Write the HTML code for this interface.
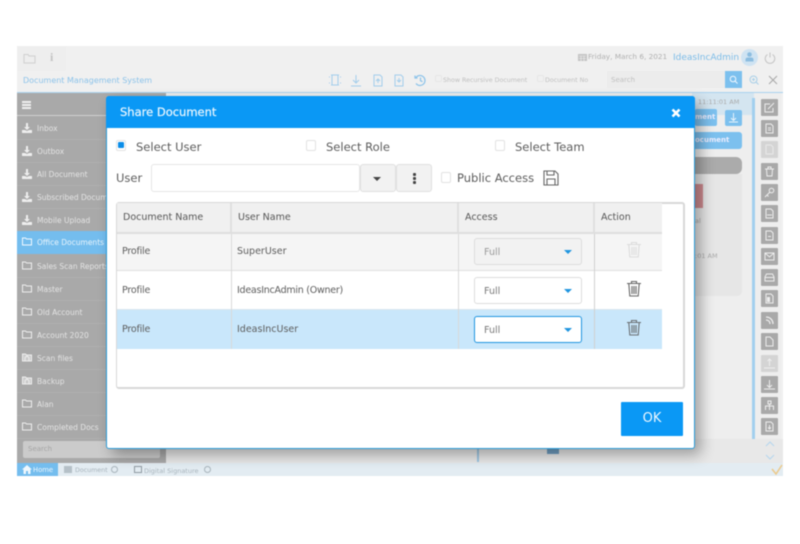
<!DOCTYPE html>
<html><head><meta charset="utf-8"><style>
*{box-sizing:border-box}
html,body{margin:0;padding:0;width:800px;height:544px;overflow:hidden;background:#fff;font-family:"DejaVu Sans","Liberation Sans",sans-serif}
body{filter:blur(.4px)}
.a{position:absolute}
.t{position:absolute;white-space:nowrap}
#app{position:absolute;left:17px;top:46px;width:766px;height:430px;background:#f0f0f0;overflow:hidden}
.si{position:absolute;left:0;width:149px;height:23px;border-bottom:1px solid #b0b0b0;color:#e4e4e4;font-size:7.5px;line-height:23px;padding-left:20px}
.si svg{position:absolute;left:5px;top:6px}
.tb{position:absolute;left:744px;width:17px;height:17px;background:#a9a9a9;border-radius:1px}
.tb svg{position:absolute;left:3px;top:3px}
.th{position:absolute;top:203px;height:29px;background:#f0f0f0;border-right:2px solid #e0e0e0;color:#555;font-size:9.5px;line-height:29px;padding-left:6px}
.td{position:absolute;height:39px;font-size:9.5px;line-height:37px;color:#5c5c5c;padding-left:6px}
.sel{position:absolute;left:474px;width:108px;height:27px;border:1px solid #ddd;border-radius:3px;background:#fff;color:#777;font-size:9.5px;line-height:27px;padding-left:9px}
.sel i{position:absolute;left:89px;top:11px;border-left:4px solid transparent;border-right:4px solid transparent;border-top:4px solid #1f95e0}
.cb{position:absolute;width:10px;height:11px;border:1px solid #e2e2e2;border-radius:2px;background:#fff}
.lab{position:absolute;white-space:nowrap;color:#5c5c5c;font-size:11.5px}
</style></head><body>
<div id="app">
 <div class="a" style="left:0;top:0;width:766px;height:46px;background:#f0f0f0"></div>
 <div class="a" style="left:0;top:0;width:49px;height:25px;background:#eeeeee"></div>
 <svg class="a" style="left:6px;top:6px" width="13" height="12" viewBox="0 0 13 12" fill="none" stroke="#cfcfcf"><path d="M1 2.500h4l1 1.500h6v7H1z"/></svg>
 <div class="t" style="left:33px;top:4px;font:bold 12px 'Liberation Serif',serif;color:#c4c4c4">i</div>
 <div class="t" style="left:6px;top:30px;font-size:8px;color:#8cc3ea">Document Management System</div>
 <svg class="a" style="left:312px;top:28px" width="120" height="14" viewBox="0 0 120 14" fill="none" stroke="#a3cdec"><path d="M2 1h8M2 11h8M3 1v10M9 1v10M0 3h1M0 9h1M11 3h1M11 9h1"/><path d="M27 1v8M24 6l3 3 3-3M22 12h10"/><path d="M45 1h6l2 2v9h-8zM49 9V5M47 7l2-2 2 2"/><path d="M66 1h6l2 2v9h-8zM70 4v4M68 6l2 2 2-2"/></svg>
 <svg class="a" style="left:397px;top:28px" width="13" height="13" viewBox="0 0 13 13" fill="none" stroke="#8cc3ea" stroke-width="1.200"><path d="M2 3.500A5 5 0 1 1 2 9.500M1 1.500v2.500h2.500M6.500 3.500v3.200l2 1"/></svg>
 <div class="cb" style="left:418px;top:29px;width:7px;height:7px;border-color:#e6e6e6;background:#f0f0f0"></div>
 <div class="t" style="left:426px;top:31px;font-size:6.300px;color:#c0c0c0">Show Recursive Document</div>
 <div class="cb" style="left:520px;top:29px;width:7px;height:7px;border-color:#e6e6e6;background:#f0f0f0"></div>
 <div class="t" style="left:528px;top:31px;font-size:6.300px;color:#c0c0c0">Document No</div>
 <svg class="a" style="left:561px;top:7px" width="9" height="8" viewBox="0 0 9 8" fill="#c4c4c4"><path d="M0 1h9v7H0z"/><path d="M1 3h7M3 3v5M6 3v5M1 5.500h7" stroke="#f0f0f0" stroke-width=".6"/></svg>
 <div class="t" style="left:571px;top:6px;font-size:7.300px;color:#b0b0b0">Friday, March 6, 2021</div>
 <div class="t" style="left:656px;top:7px;font-size:9px;color:#7cbce8">IdeasIncAdmin</div>
 <div class="a" style="left:724px;top:3px;width:17px;height:17px;border-radius:50%;background:#cfe3f2"></div>
 <svg class="a" style="left:728px;top:6px" width="9" height="10" viewBox="0 0 9 10" fill="#8cbde0"><circle cx="4.500" cy="2.500" r="2.300"/><path d="M.5 9.500V7.500Q.5 5.500 3 5.500h3Q8.500 5.500 8.500 7.500v2z"/></svg>
 <svg class="a" style="left:747px;top:6px" width="12" height="12" viewBox="0 0 12 12" fill="none" stroke="#c4c4c4"><path d="M3.500 2.500a4.800 4.800 0 1 0 5 0M6 .5v5"/></svg>
 <div class="a" style="left:590px;top:25px;width:118px;height:17px;background:#ececec"></div>
 <div class="t" style="left:594px;top:30px;font-size:7px;color:#c0c0c0">Search</div>
 <div class="a" style="left:708px;top:25px;width:17px;height:17px;background:#7cc0ee"></div>
 <svg class="a" style="left:712px;top:29px" width="9" height="9" viewBox="0 0 9 9" fill="none" stroke="#f0f8ff"><circle cx="4" cy="4" r="2.800"/><path d="M6 6l2.500 2.500"/></svg>
 <svg class="a" style="left:732px;top:29px" width="10" height="10" viewBox="0 0 10 10" fill="none" stroke="#a8cfe8"><circle cx="4.500" cy="4.500" r="3.500"/><path d="M7 7l2.500 2.500M3 4.500h3M4.500 3v3"/></svg>
 <svg class="a" style="left:751px;top:29px" width="10" height="10" viewBox="0 0 10 10" fill="none" stroke="#a8a8a8"><path d="M1 1l8 8M9 1l-8 8"/></svg>
 <div class="a" style="left:0;top:46px;width:766px;height:1px;background:#a9d2ef"></div>

 <div class="a" style="left:149px;top:47px;width:615px;height:370px;background:#eeeeee"></div>
 <div class="a" style="left:675px;top:47px;width:62px;height:22px;background:#d4e5f0"></div>
 <div class="t" style="left:681px;top:52px;font-size:6.500px;color:#aaa">11:11:01 AM</div>
 <div class="a" style="left:678px;top:63px;width:22px;height:17px;background:#7cc0ee;border-radius:2px;color:#eef;font-size:7px;font-weight:bold;line-height:16px;text-align:right;padding-right:2px">ment</div>
 <div class="a" style="left:708px;top:64px;width:17px;height:16px;background:#7cc0ee;border-radius:2px"></div>
 <svg class="a" style="left:712px;top:67px" width="9" height="10" viewBox="0 0 9 10" fill="none" stroke="#e8f4fc"><path d="M4.500 0v7M2 5l2.500 2.500L7 5M0 9h9"/></svg>
 <div class="a" style="left:678px;top:86px;width:47px;height:17px;background:#7cc0ee;border-radius:0 3px 3px 0;color:#eef;font-size:7px;font-weight:bold;line-height:16px">ocument</div>
 <div class="a" style="left:678px;top:111px;width:47px;height:17px;background:#ababab;border-radius:0 6px 6px 0"></div>
 <div class="a" style="left:678px;top:128px;width:47px;height:122px;background:#e6e6e6;border-radius:0 0 5px 0"></div>
 <div class="a" style="left:678px;top:138px;width:8px;height:24px;background:#cd8a8f"></div>
 <div class="t" style="left:678px;top:171px;font-size:6.500px;color:#aaa">al</div>
 <div class="t" style="left:678px;top:206px;font-size:6.500px;color:#aaa">:01 AM</div>
 <div class="a" style="left:735px;top:52px;width:3px;height:372px;background:#a2cfee"></div>
 <div class="a" style="left:149px;top:393px;width:617px;height:24px;background:#e8e8e8"></div>
 <div class="a" style="left:460px;top:394px;width:2px;height:22px;background:#9dc6e2"></div>
 <div class="a" style="left:530px;top:396px;width:12px;height:12px;background:#6f9dc0"></div>

 <!-- toolbar -->
 <div class="tb" style="top:53px"><svg width="11" height="11" viewBox="0 0 11 11" fill="none" stroke="#ededed"><path d="M9 6v4H1V2h5M4 7l6-6"/></svg></div>
 <div class="tb" style="top:74px"><svg width="11" height="11" viewBox="0 0 11 11" fill="none" stroke="#ededed"><path d="M2 1h5l2 2v7H2zM4 5h3M4 7h3"/></svg></div>
 <div class="tb" style="top:95px;background:#d4d4d4"><svg width="11" height="11" viewBox="0 0 11 11" fill="none" stroke="#e8e8e8"><path d="M2 1h5l2 2v7H2z"/></svg></div>
 <div class="tb" style="top:117px"><svg width="11" height="11" viewBox="0 0 11 11" fill="none" stroke="#ededed"><path d="M1 3h9M4 3V1h3v2M2.500 3l.5 7h5l.5-7"/></svg></div>
 <div class="tb" style="top:138px"><svg width="11" height="11" viewBox="0 0 11 11" fill="none" stroke="#ededed"><circle cx="7.500" cy="3.500" r="2.300"/><path d="M6 5l-5 5M3 8l1.500 1.500"/></svg></div>
 <div class="tb" style="top:159px"><svg width="11" height="11" viewBox="0 0 11 11" fill="none" stroke="#ededed"><path d="M2 1h5l2 2v7H2zM3 7h5"/></svg></div>
 <div class="tb" style="top:181px"><svg width="11" height="11" viewBox="0 0 11 11" fill="none" stroke="#ededed"><path d="M2 1h5l2 2v7H2zM4 6.500h3"/></svg></div>
 <div class="tb" style="top:202px"><svg width="11" height="11" viewBox="0 0 11 11" fill="none" stroke="#ededed"><path d="M1 2h9v7H1zM1 2l4.500 4L10 2"/></svg></div>
 <div class="tb" style="top:223px"><svg width="11" height="11" viewBox="0 0 11 11" fill="none" stroke="#ededed"><path d="M1 9V5l1.500-3h6L10 5v4zM1 5.500h9"/></svg></div>
 <div class="tb" style="top:244px"><svg width="11" height="11" viewBox="0 0 11 11" fill="#ededed"><path d="M2 1h5l2 2v7H2z" fill="none" stroke="#ededed"/><path d="M3 4h3v5H3z"/></svg></div>
 <div class="tb" style="top:266px"><svg width="11" height="11" viewBox="0 0 11 11" fill="none" stroke="#ededed" stroke-width="1.300"><path d="M2 2c4 0 7 3 7 7M2 5c2.500 0 4 1.500 4 4"/></svg></div>
 <div class="tb" style="top:287px"><svg width="11" height="11" viewBox="0 0 11 11" fill="none" stroke="#ededed"><path d="M2 1h4l3 3v6H2z"/></svg></div>
 <div class="tb" style="top:309px;background:#d4d4d4"><svg width="11" height="11" viewBox="0 0 11 11" fill="none" stroke="#eee"><path d="M5.500 1v7M3.500 3l2-2 2 2M0 10h11"/></svg></div>
 <div class="tb" style="top:330px"><svg width="11" height="11" viewBox="0 0 11 11" fill="none" stroke="#ededed"><path d="M5.500 1v7M3 6l2.500 2.500L8 6M0 10h11"/></svg></div>
 <div class="tb" style="top:351px"><svg width="11" height="11" viewBox="0 0 11 11" fill="none" stroke="#ededed"><path d="M4 1h3v3H4zM5.500 4v2M1.500 10V6h8v4M5.500 6v4"/></svg></div>
 <div class="tb" style="top:372px"><svg width="11" height="11" viewBox="0 0 11 11" fill="none" stroke="#ededed"><path d="M2 1h5l2 2v7H2zM5.500 4v4M4 6.500l1.500 1.500L7 6.500"/></svg></div>
 <svg class="a" style="left:748px;top:395px" width="10" height="22" viewBox="0 0 10 22" fill="none" stroke="#b4d6ee"><path d="M1 5l4-4 4 4M1 14l4 4 4-4"/></svg>

 <!-- sidebar -->
 <div class="a" style="left:0;top:47px;width:149px;height:370px;background:#a9a9a9"></div>
 <div class="a" style="left:5px;top:55px;width:9px;height:1.500px;background:#eee;box-shadow:0 3px 0 #eee,0 6px 0 #eee"></div>
 <div class="a" style="left:0;top:69px;width:149px;height:1px;background:#d0d0d0"></div>
 <div class="si" style="top:71px"><svg width="10" height="10" viewBox="0 0 10 10" fill="#eee"><path d="M4 0h2v4h2L5 7 2 4h2zM0 7h3l2 1 2-1h3v3H0z"/></svg>Inbox</div>
 <div class="si" style="top:94px"><svg width="10" height="10" viewBox="0 0 10 10" fill="#eee"><path d="M4 0h2v4h2L5 7 2 4h2zM0 7h3l2 1 2-1h3v3H0z"/></svg>Outbox</div>
 <div class="si" style="top:117px"><svg width="10" height="10" viewBox="0 0 10 10" fill="#eee"><path d="M4 0h2v4h2L5 7 2 4h2zM0 7h3l2 1 2-1h3v3H0z"/></svg>All Document</div>
 <div class="si" style="top:140px"><svg width="10" height="10" viewBox="0 0 10 10" fill="#eee"><path d="M4 0h2v4h2L5 7 2 4h2zM0 7h3l2 1 2-1h3v3H0z"/></svg>Subscribed Documents</div>
 <div class="si" style="top:163px"><svg width="10" height="10" viewBox="0 0 10 10" fill="#eee"><path d="M4 0h2v4h2L5 7 2 4h2zM0 7h3l2 1 2-1h3v3H0z"/></svg>Mobile Upload</div>
 <div class="si" style="top:185px;background:#74bdee;color:#e8f4fc;border:0"><svg width="10" height="9" viewBox="0 0 10 9" fill="none" stroke="#f2f9ff"><path d="M.5 1h3l1 1h5v6H.5z"/></svg>Office Documents</div>
 <div class="si" style="top:209px"><svg width="10" height="9" viewBox="0 0 10 9" fill="none" stroke="#eee"><path d="M.5 1h3l1 1h5v6H.5z"/></svg>Sales Scan Reports</div>
 <div class="si" style="top:232px"><svg width="10" height="9" viewBox="0 0 10 9" fill="none" stroke="#eee"><path d="M.5 1h3l1 1h5v6H.5z"/></svg>Master</div>
 <div class="si" style="top:255px"><svg width="10" height="9" viewBox="0 0 10 9" fill="none" stroke="#eee"><path d="M.5 1h3l1 1h5v6H.5z"/></svg>Old Account</div>
 <div class="si" style="top:278px"><svg width="10" height="9" viewBox="0 0 10 9" fill="none" stroke="#eee"><path d="M.5 1h3l1 1h5v6H.5z"/></svg>Account 2020</div>
 <div class="si" style="top:301px"><svg width="10" height="9" viewBox="0 0 10 9" fill="none" stroke="#eee"><path d="M.5 1h3l1 1h5v6H.5zM3 8V4.500L5 3l2 1.500V8" fill="#eee" fill-opacity=".5"/></svg>Scan files</div>
 <div class="si" style="top:324px"><svg width="10" height="9" viewBox="0 0 10 9" fill="none" stroke="#eee"><path d="M.5 1h3l1 1h5v6H.5zM3 8V4.500L5 3l2 1.500V8" fill="#eee" fill-opacity=".5"/></svg>Backup</div>
 <div class="si" style="top:347px"><svg width="10" height="9" viewBox="0 0 10 9" fill="none" stroke="#eee"><path d="M.5 1h3l1 1h5v6H.5z"/></svg>Alan</div>
 <div class="si" style="top:370px"><svg width="10" height="9" viewBox="0 0 10 9" fill="none" stroke="#eee"><path d="M.5 1h3l1 1h5v6H.5z"/></svg>Completed Docs</div>
 <div class="a" style="left:6px;top:395px;width:137px;height:17px;background:#cbcbcb;border-radius:2px;color:#a4a4a4;font-size:7px;line-height:17px;padding-left:5px">Search</div>

 <!-- tabs -->
 <div class="a" style="left:0;top:417px;width:766px;height:13px;background:#e3ecf2"></div>
 <div class="a" style="left:0;top:417px;width:41px;height:13px;background:#74bdee"></div>
 <div class="t" style="left:16px;top:420px;font-size:6.800px;color:#eef7fd">Home</div>
 <svg class="a" style="left:5px;top:419px" width="10" height="9" viewBox="0 0 10 9" fill="#eef7fd"><path d="M5 0L0 4.500h1.500V9h2.500V6h2v3h2.500V4.500H10z"/></svg>
 <div class="a" style="left:47px;top:420px;width:8px;height:7px;background:#b5c0c8"></div>
 <div class="t" style="left:58px;top:421px;font-size:6.300px;color:#a8b4bc">Document</div>
 <div class="a" style="left:94px;top:420px;width:7px;height:7px;border:1px solid #a8b4bc;border-radius:50%"></div>
 <div class="a" style="left:117px;top:420px;width:8px;height:7px;border:1px solid #8f9aa2"></div>
 <div class="t" style="left:127px;top:421px;font-size:6.500px;color:#a8b4bc">Digital Signature</div>
 <div class="a" style="left:187px;top:420px;width:7px;height:7px;border:1px solid #a8b4bc;border-radius:50%"></div>
 <svg class="a" style="left:754px;top:418px" width="12" height="12" viewBox="0 0 12 12" fill="none" stroke="#ecc98a" stroke-width="1.500"><path d="M1 5l4 5 6-9"/></svg>
</div>

<!-- modal -->
<div class="a" style="left:106px;top:96px;width:589px;height:353px;background:#fff;border:1px solid #2a9bd8;border-radius:3px;box-shadow:6px 6px 14px rgba(0,0,0,.32)"></div>
<div class="a" style="left:106px;top:96px;width:589px;height:32px;background:#0a98f5;border-radius:3px 3px 0 0"></div>
<div class="t" style="left:120px;top:105px;font-size:11.500px;color:#eaf6fe;-webkit-text-stroke:.2px #eaf6fe">Share Document</div>
<svg class="a" style="left:671px;top:108px" width="10" height="10" viewBox="0 0 10 10" fill="none" stroke="#fff" stroke-width="2.600"><path d="M1.500 1.500l7 7M8.500 1.500l-7 7"/></svg>

<div class="cb" style="left:116px;top:140px"></div>
<div class="a" style="left:118px;top:142px;width:6px;height:6px;background:#0a8de8;border-radius:1px"></div>
<div class="lab" style="left:136px;top:140px">Select User</div>
<div class="cb" style="left:306px;top:140px"></div>
<div class="lab" style="left:326px;top:140px">Select Role</div>
<div class="cb" style="left:495px;top:140px"></div>
<div class="lab" style="left:515px;top:140px">Select Team</div>

<div class="lab" style="left:116px;top:171px">User</div>
<div class="a" style="left:151px;top:164px;width:209px;height:28px;border:1px solid #e6e6e6;border-radius:3px;background:#fff"></div>
<div class="a" style="left:360px;top:164px;width:36px;height:28px;border:1px solid #e0e0e0;border-radius:3px;background:#f2f2f2"></div>
<div class="a" style="left:373px;top:177px;border-left:4px solid transparent;border-right:4px solid transparent;border-top:4px solid #444"></div>
<div class="a" style="left:396px;top:164px;width:36px;height:28px;border:1px solid #e0e0e0;border-radius:3px;background:#f2f2f2"></div>
<div class="a" style="left:413px;top:173px;width:3px;height:3px;background:#444;box-shadow:0 4px 0 #444,0 8px 0 #444;border-radius:1px"></div>
<div class="cb" style="left:441px;top:172px"></div>
<div class="lab" style="left:457px;top:171px">Public Access</div>
<svg class="a" style="left:543px;top:170px" width="16" height="16" viewBox="0 0 16 16" fill="none" stroke="#666" stroke-width="1.100"><path d="M1 1h11l3 3v11H1zM4 1v4h7V1M4 15V9h8v6"/></svg>

<!-- table -->
<div class="a" style="left:116px;top:202px;width:569px;height:187px;border:1px solid #d8d8d8;border-width:2px 2px 2px 1px;border-radius:3px;background:#fff"></div>
<div class="th" style="left:117px;width:115px">Document Name</div>
<div class="th" style="left:232px;width:227px">User Name</div>
<div class="th" style="left:459px;width:136px">Access</div>
<div class="th" style="left:595px;width:67px;border-right:0">Action</div>
<div class="a" style="left:117px;top:232px;width:545px;height:2px;background:#dedede"></div>

<div class="a" style="left:117px;top:234px;width:545px;height:37px;background:#f5f5f5;border-bottom:1px solid #e0e0e0"></div>
<div class="a" style="left:117px;top:271px;width:545px;height:39px;background:#fff;border-bottom:1px solid #d9e6ee"></div>
<div class="a" style="left:117px;top:310px;width:545px;height:39px;background:#c9e7fb"></div>
<div class="a" style="left:231px;top:234px;width:1px;height:115px;background:#d9d9d9"></div>
<div class="a" style="left:458px;top:234px;width:1px;height:115px;background:#d9d9d9"></div>
<div class="a" style="left:594px;top:234px;width:1px;height:115px;background:#d0d0d0"></div>

<div class="td" style="left:116px;top:233px;letter-spacing:-.2px">Profile</div>
<div class="td" style="left:231px;top:233px">SuperUser</div>
<div class="td" style="left:116px;top:272px;letter-spacing:-.2px">Profile</div>
<div class="td" style="left:231px;top:272px;letter-spacing:-.25px">IdeasIncAdmin (Owner)</div>
<div class="td" style="left:116px;top:311px;letter-spacing:-.2px">Profile</div>
<div class="td" style="left:231px;top:311px">IdeasIncUser</div>

<div class="sel" style="top:238px;background:#f2f2f2;color:#999">Full<i></i></div>
<div class="sel" style="top:277px">Full<i></i></div>
<div class="sel" style="top:316px;border-color:#1f95e0">Full<i></i></div>

<svg class="a" style="left:626px;top:241px" width="16" height="17" viewBox="0 0 16 17" fill="none" stroke="#dcdcdc" stroke-width="1.100"><path d="M1 3.500h14M5.500 3.500V1.500h5v2M2.800 3.500l1 12.500h8.400l1-12.500M6 6v8M8 6v8M10 6v8"/></svg>
<svg class="a" style="left:626px;top:280px" width="16" height="17" viewBox="0 0 16 17" fill="none" stroke="#666" stroke-width="1.100"><path d="M1 3.500h14M5.500 3.500V1.500h5v2M2.800 3.500l1 12.500h8.400l1-12.500M6 6v8M8 6v8M10 6v8"/></svg>
<svg class="a" style="left:626px;top:319px" width="16" height="17" viewBox="0 0 16 17" fill="none" stroke="#6a6f73" stroke-width="1.100"><path d="M1 3.500h14M5.500 3.500V1.500h5v2M2.800 3.500l1 12.500h8.400l1-12.500M6 6v8M8 6v8M10 6v8"/></svg>

<div class="a" style="left:621px;top:402px;width:62px;height:34px;background:#0a98f5;border-radius:1px;color:#eef8ff;font-size:13px;line-height:34px;text-align:center">OK</div>
</body></html>
